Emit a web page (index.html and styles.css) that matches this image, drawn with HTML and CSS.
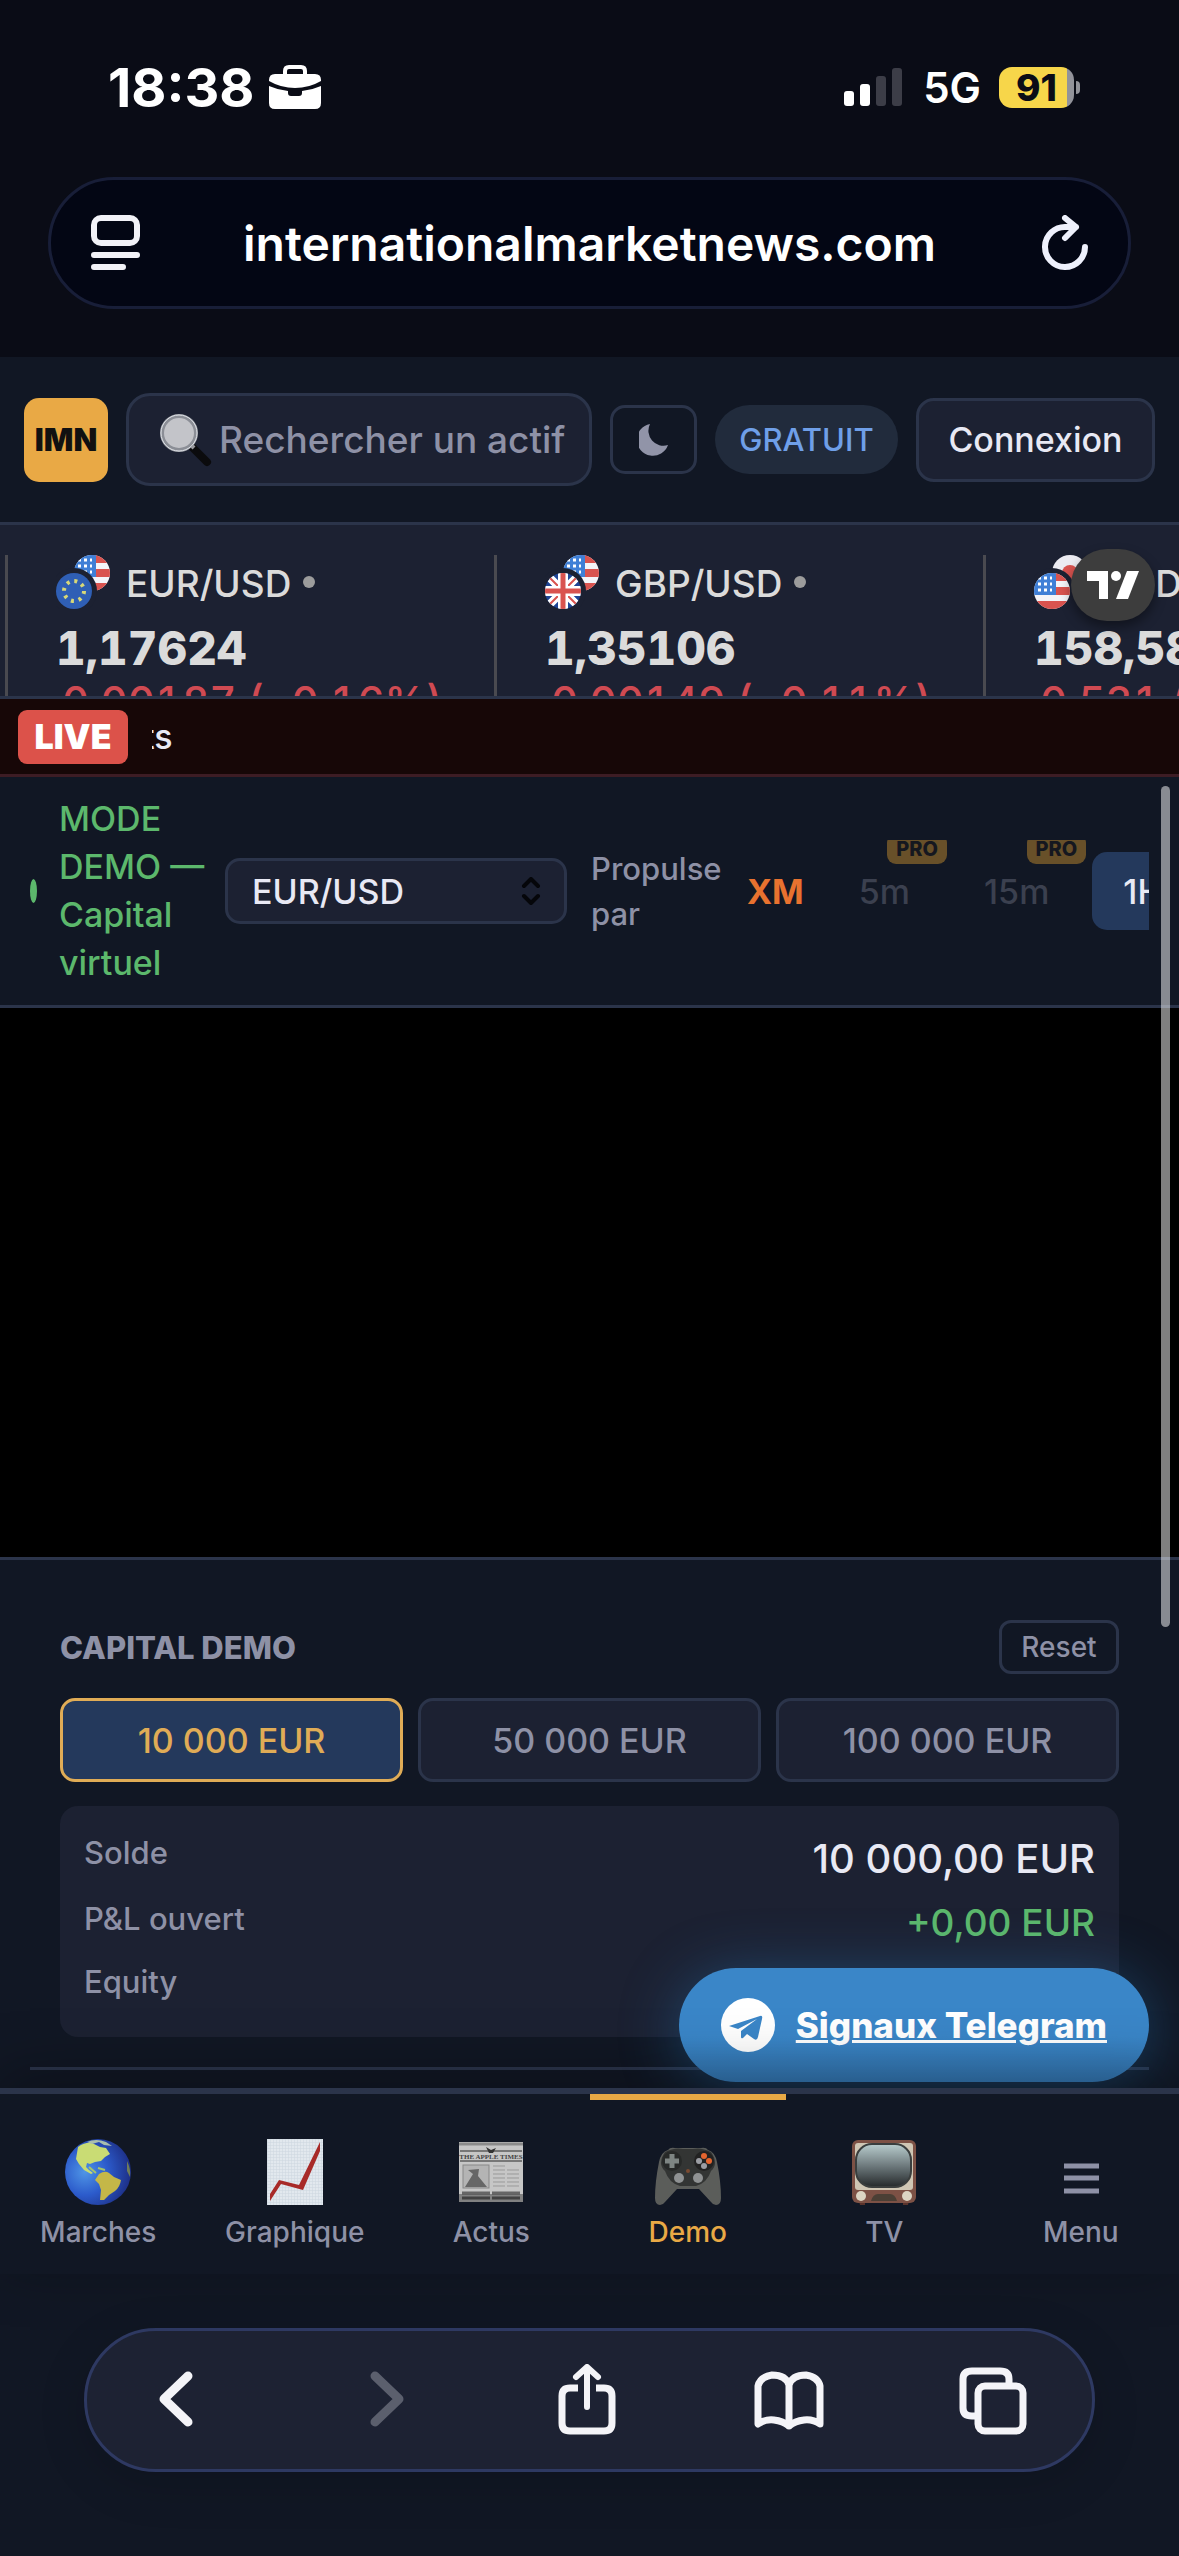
FILE: index.html
```html
<!DOCTYPE html>
<html lang="fr">

<head>
    <meta charset="UTF-8">
    <meta name="viewport" content="width=device-width, initial-scale=1.0">
    <title>internationalmarketnews.com</title>
    <link rel="stylesheet" href="styles.css">
</head>

<body>
    <!-- shared flag drawings -->
    <svg class="defs" aria-hidden="true">
        <defs>
            <clipPath id="round"><circle cx="18" cy="18" r="18" /></clipPath>
            <symbol id="us" viewBox="0 0 36 36">
                <g clip-path="url(#round)">
                    <rect width="36" height="36" fill="#f4f4f8" />
                    <path d="M18 0h18v8H18zM18 14h18v8H18zM0 28h36v8H0z" fill="#d9534f" />
                    <rect width="22" height="22" fill="#3f7fd6" />
                    <path d="M4 5h14M4 11h14M4 17h14" stroke="#fff" stroke-width="3" stroke-dasharray="3 3" />
                </g>
            </symbol>
            <symbol id="eu" viewBox="0 0 36 36">
                <circle cx="18" cy="18" r="18" fill="#2f5fb5" />
                <circle cx="18" cy="18" r="10" fill="none" stroke="#d8d878" stroke-width="4" stroke-dasharray="3 4.85" />
            </symbol>
            <symbol id="gb" viewBox="0 0 36 36">
                <g clip-path="url(#round)">
                    <rect width="36" height="36" fill="#1f4596" />
                    <path d="M0 0l36 36M36 0L0 36" stroke="#fff" stroke-width="8" />
                    <path d="M0 0l36 36M36 0L0 36" stroke="#d9534f" stroke-width="2" />
                    <path d="M18 0v36M0 18h36" stroke="#fff" stroke-width="10" />
                    <path d="M18 0v36M0 18h36" stroke="#d9534f" stroke-width="5" />
                </g>
            </symbol>
            <symbol id="jp" viewBox="0 0 36 36">
                <circle cx="18" cy="18" r="18" fill="#ececf2" />
                <circle cx="18" cy="18" r="8" fill="#d9534f" />
            </symbol>
        </defs>
    </svg>

    <div class="browser-top">
        <div class="status">
            <span class="time">18:38</span>
            <svg class="briefcase" width="52" height="44" viewBox="0 0 52 44">
                <path d="M16 9V6q0-4 4-4h12q4 0 4 4v3" fill="none" stroke="#fff" stroke-width="4" />
                <path d="M6 9h40q6 0 6 6v1q-12 7-26 7T0 16v-1q0-6 6-6z" fill="#fff" />
                <path d="M0 21q9 4 19 5v2q0 3 3 3h8q3 0 3-3v-2q10-1 19-5v17q0 6-6 6H6q-6 0-6-6z" fill="#fff" />
            </svg>
            <svg class="signal" width="58" height="38" viewBox="0 0 58 38">
                <rect x="0" y="23" width="10" height="15" rx="3" fill="#fff" />
                <rect x="16" y="16" width="10" height="22" rx="3" fill="#fff" />
                <rect x="32" y="8" width="10" height="30" rx="3" fill="#3c3d47" />
                <rect x="48" y="0" width="10" height="38" rx="3" fill="#3c3d47" />
            </svg>
            <span class="network">5G</span>
            <span class="battery">91</span>
        </div>
        <div class="address">
            <button class="bare" aria-label="Page">
                <svg width="50" height="56" viewBox="0 0 50 56" fill="none" stroke="#f2f2f8" stroke-width="6" stroke-linecap="round">
                    <rect x="3" y="3" width="43" height="25" rx="7" />
                    <path d="M3 40h43M3 52h29" />
                </svg>
            </button>
            <span class="url">internationalmarketnews.com</span>
            <button class="bare" aria-label="Recharger">
                <svg width="50" height="56" viewBox="0 0 50 56" fill="none" stroke="#eef0fc" stroke-width="6" stroke-linecap="round" stroke-linejoin="round">
                    <path d="M47 32A20 20 0 1 1 28 12h10M27 3l11 9-11 11" />
                </svg>
            </button>
        </div>
    </div>

    <header class="header">
        <a class="logo" href="#">IMN</a>
        <label class="search">
            <svg width="54" height="54" viewBox="0 0 54 54">
                <path d="M34 35l14 14" stroke="#0b0b0d" stroke-width="8" stroke-linecap="round" />
                <path d="M31 31l4 4" stroke="#9a9a9f" stroke-width="4" />
                <circle cx="20" cy="20" r="17" fill="#c3c4c9" stroke="#8b8e96" stroke-width="4" />
                <circle cx="20" cy="20" r="18" fill="none" stroke="#e2e5ea" stroke-width="1" />
            </svg>
            <input type="text" placeholder="Rechercher un actif" aria-label="Rechercher un actif">
        </label>
        <button class="theme" aria-label="Theme">
            <svg width="30" height="34" viewBox="0 0 30 34">
                <path d="M11 1A16 16 0 1 0 29 22A15 15 0 0 1 11 1z" fill="#9194a8" />
            </svg>
        </button>
        <span class="plan">GRATUIT</span>
        <button class="login">Connexion</button>
    </header>

    <section class="ticker">
        <div class="quote">
            <div class="pair">
                <svg width="54" height="54"><use href="#us" x="18" y="0" width="36" height="36" /><circle cx="18" cy="36" r="23" fill="#1c2132" /><use href="#eu" x="0" y="18" width="36" height="36" /></svg>
                <span>EUR/USD</span><i></i>
            </div>
            <div class="price">1,17624</div>
            <div class="change">0,00187 (−0,16%)</div>
        </div>
        <div class="quote">
            <div class="pair">
                <svg width="54" height="54"><use href="#us" x="18" y="0" width="36" height="36" /><circle cx="18" cy="36" r="23" fill="#1c2132" /><use href="#gb" x="0" y="18" width="36" height="36" /></svg>
                <span>GBP/USD</span><i></i>
            </div>
            <div class="price">1,35106</div>
            <div class="change">0,00149 (−0,11%)</div>
        </div>
        <div class="quote">
            <div class="pair">
                <svg width="54" height="54"><use href="#jp" x="18" y="0" width="36" height="36" /><circle cx="18" cy="36" r="23" fill="#1c2132" /><use href="#us" x="0" y="18" width="36" height="36" /></svg>
                <span>USD/JPY</span><i></i>
            </div>
            <div class="price">158,583</div>
            <div class="change">0,531 (−0,33%)</div>
        </div>
        <a class="tv-badge" href="#" aria-label="TradingView">
            <svg width="52" height="28" viewBox="0 0 52 28" fill="#fff">
                <path d="M0 0h21v28H12V10H0z" />
                <circle cx="29" cy="5" r="5" />
                <path d="M40 0h12L41 28H29z" />
            </svg>
        </a>
    </section>

    <section class="live">
        <strong>LIVE</strong>
        <div class="marquee"><span>ts</span></div>
    </section>

    <main class="demo">
        <div class="toolbar">
            <span class="dot"></span>
            <span class="mode">MODE DEMO — Capital virtuel</span>
            <div class="select">
                <select aria-label="Paire">
                    <option>EUR/USD</option>
                </select>
                <svg width="20" height="28" viewBox="0 0 20 28" fill="none" stroke="#05060a" stroke-width="4" stroke-linecap="round" stroke-linejoin="round">
                    <path d="M3 9l7-7 7 7M3 19l7 7 7-7" />
                </svg>
            </div>
            <span class="powered">Propulse par</span>
            <a class="broker" href="#">XM</a>
            <div class="frames">
                <button disabled>5m<em>PRO</em></button>
                <button disabled>15m<em>PRO</em></button>
                <button class="active">1H</button>
            </div>
        </div>

        <div class="chart"></div>

        <div class="panel">
            <section class="capital">
                <div class="capital-head">
                    <h2>CAPITAL DEMO</h2>
                    <button class="reset">Reset</button>
                </div>
                <div class="amounts">
                    <button class="active">10 000 EUR</button>
                    <button>50 000 EUR</button>
                    <button>100 000 EUR</button>
                </div>
                <dl class="balance">
                    <div class="balance-main">
                        <dt>Solde</dt>
                        <dd>10 000,00 EUR</dd>
                    </div>
                    <div>
                        <dt>P&amp;L ouvert</dt>
                        <dd class="up">+0,00 EUR</dd>
                    </div>
                    <div>
                        <dt>Equity</dt>
                        <dd></dd>
                    </div>
                </dl>
            </section>
        </div>

        <span class="scrollbar"></span>
        <a class="telegram" href="#">
            <svg width="54" height="54" viewBox="0 0 54 54">
                <circle cx="27" cy="27" r="27" fill="#fff" />
                <path d="M8 28L39 18q3-1 2 3l-4 18q-1 4-4 2l-7-5-4 4q-2 1-2-1v-6l16-12-19 10z" fill="#3a86c8" />
            </svg>
            <span>Signaux Telegram</span>
        </a>
    </main>

    <nav class="tabs">
        <a href="#">
            <svg width="66" height="66" viewBox="0 0 66 66">
                <defs>
                    <radialGradient id="sea" cx=".3" cy=".5" r=".7">
                        <stop offset="0" stop-color="#4f95e6" />
                        <stop offset=".5" stop-color="#2c5bcb" />
                        <stop offset="1" stop-color="#1d2f86" />
                    </radialGradient>
                </defs>
                <circle cx="33" cy="33" r="33" fill="url(#sea)" />
                <path d="M13 8q7-5 14-4l8 4 6 1 4 6-5 3-4 4-6 1-5 2-3-1-1 4 3 3 4 3-2 1-7-4-5-6-3-5z" fill="#c9dc74" />
                <path d="M22 3q9-4 19 0l6 4-8-1-5-3-7 2z" fill="#a9bfae" />
                <path d="M34 35q6-4 10-1l5 4 7 3q-1 7-6 11l-6 4-5 5-4 0 1-10-2-6-4-4z" fill="#c4b748" />
                <path d="M33 29l7 2M24 28l7 6" stroke="#a6c46c" stroke-width="2" />
                <path d="M62 22q4 8 3 16l-3-6z" fill="#6f7c58" />
            </svg>
            Marches
        </a>
        <a href="#">
            <svg width="56" height="66" viewBox="0 0 56 66">
                <defs>
                    <pattern id="grid" width="3" height="3" patternUnits="userSpaceOnUse">
                        <path d="M3 0H0v3" fill="none" stroke="#ccd5de" />
                    </pattern>
                </defs>
                <rect width="56" height="66" fill="#e2e8ee" />
                <rect width="56" height="66" fill="url(#grid)" />
                <path d="M3 62v-7l9-14 20 5L53 3v9L36 51l-22-6z" fill="#a82a28" />
            </svg>
            Graphique
        </a>
        <a href="#">
            <svg width="66" height="66" viewBox="0 0 66 66">
                <rect x="1" y="3" width="64" height="60" fill="#c6c6c6" />
                <path d="M1 5h64" stroke="#8b8b8b" stroke-width="3" />
                <path d="M2 12h62M2 22h62" stroke="#777" stroke-width="2" />
                <path d="M28 8l5 3 5-2-3 5h-4z" fill="#333" />
                <text x="33" y="20" class="paper-title">THE APPLE TIMES</text>
                <rect x="5" y="26" width="26" height="23" fill="#b4b4b4" stroke="#888" />
                <path d="M7 48l8-13-5-4 11-1-1 7 9 11z" fill="#666" />
                <path d="M35 27h13M35 31h26M35 35h26M35 39h26M35 43h26M35 47h26" stroke="#999" stroke-dasharray="12 2" />
                <path d="M4 54h58M4 59h58" stroke="#666" stroke-width="3" stroke-dasharray="28 2" />
                <rect x="1" y="55" width="64" height="8" fill="#000" opacity=".35" />
            </svg>
            Actus
        </a>
        <a href="#" class="active">
            <svg width="66" height="66" viewBox="0 0 66 66">
                <path d="M13 11q2-3 7-2h26q5-1 7 2 7 2 9 12 4 20 4 36 0 7-5 7-3 0-5-3L44 50H22l-12 13q-2 3-5 3-5 0-5-7 0-16 4-36 2-10 9-12z" fill="#5b5d5a" />
                <path d="M10 13q10-5 18-3h10q8-2 18 3 8 12 0 19-4 12-15 15H25Q14 44 10 32q-8-7 0-19z" fill="#333534" />
                <circle cx="17" cy="22" r="10" fill="#272928" />
                <path d="M17 15v14M10 22h14" stroke="#7e8583" stroke-width="5" />
                <circle cx="49" cy="22" r="10" fill="#222" />
                <circle cx="49" cy="17" r="3" fill="#e5652f" />
                <circle cx="54" cy="22" r="3" fill="#e5652f" />
                <circle cx="44" cy="22" r="3" fill="#9b9da3" />
                <circle cx="49" cy="27" r="3" fill="#9b9da3" />
                <circle cx="24" cy="39" r="5" fill="#8f9293" />
                <circle cx="43" cy="39" r="5" fill="#8f9293" />
                <circle cx="33" cy="32" r="2" fill="#7b4a30" />
            </svg>
            Demo
        </a>
        <a href="#">
            <svg width="66" height="66" viewBox="0 0 66 66">
                <defs>
                    <linearGradient id="tube" x2="0" y2="1">
                        <stop offset="0" stop-color="#b9cdce" />
                        <stop offset=".5" stop-color="#6f7b7e" />
                        <stop offset="1" stop-color="#25292b" />
                    </linearGradient>
                </defs>
                <path d="M8 62h6v4H9zM52 62h6l-1 4h-5z" fill="#5a332b" />
                <rect x="1" y="1" width="64" height="63" rx="6" fill="#7d5145" />
                <rect x="4" y="4" width="58" height="47" rx="3" fill="#cfc6b4" />
                <rect x="5" y="5" width="55" height="43" rx="16" fill="url(#tube)" stroke="#3a3e3e" stroke-width="2" />
                <path d="M20 62q2-7 7-7h12q5 0 7 7z" fill="#4b3f35" />
                <circle cx="10" cy="57" r="5" fill="#dcd5c3" />
                <circle cx="56" cy="57" r="5" fill="#dcd5c3" />
            </svg>
            TV
        </a>
        <a href="#">
            <svg width="66" height="66" viewBox="0 0 66 66">
                <path d="M16 27h35M16 39h35M16 52h35" stroke="#8e91a6" stroke-width="5" />
            </svg>
            Menu
        </a>
    </nav>

    <footer class="browser-bottom">
        <div class="controls">
            <button class="bare" aria-label="Retour">
                <svg width="72" height="72" viewBox="0 0 72 72" fill="none" stroke="#f4f4f8" stroke-width="9" stroke-linecap="round" stroke-linejoin="round">
                    <path d="M48 12L24 35l24 23" />
                </svg>
            </button>
            <button class="bare" aria-label="Suivant">
                <svg width="72" height="72" viewBox="0 0 72 72" fill="none" stroke="#5b5f6d" stroke-width="9" stroke-linecap="round" stroke-linejoin="round">
                    <path d="M31 12l24 23-24 23" />
                </svg>
            </button>
            <button class="bare" aria-label="Partager">
                <svg width="72" height="72" viewBox="0 0 72 72" fill="none" stroke="#f4f4f8" stroke-width="6" stroke-linecap="round" stroke-linejoin="round">
                    <path d="M39 43V4M28 13L39 3l11 10" />
                    <path d="M30 24h-8q-8 0-8 8v27q0 8 8 8h34q8 0 8-8V32q0-8-8-8h-8" stroke-width="7" stroke-linecap="butt" />
                </svg>
            </button>
            <button class="bare" aria-label="Signets">
                <svg width="72" height="72" viewBox="0 0 72 72" fill="none" stroke="#f4f4f8" stroke-width="7" stroke-linecap="round" stroke-linejoin="round">
                    <path d="M37 62Q31 57 22 56 13 55 6 60V22Q8 13 20 11q14 0 17 10 3-10 17-10 12 2 14 11v38q-7-5-16-4-9 1-15 6zM37 21v41" />
                </svg>
            </button>
            <button class="bare" aria-label="Onglets">
                <svg width="72" height="72" viewBox="0 0 72 72" fill="none" stroke="#f4f4f8" stroke-width="7">
                    <rect x="22" y="22" width="45" height="45" rx="7" />
                    <path d="M19 52h-3q-9 0-9-8V15q0-8 9-8h28q9 0 9 8v4" />
                </svg>
            </button>
        </div>
    </footer>
</body>

</html>
```
FILE: styles.css
```css
* {
    box-sizing: border-box;
}

body {
    margin: 0;
    min-height: 100vh;
    display: flex;
    flex-direction: column;
    background-color: #111724;
    color: #e8e9f4;
    font-family: Inter, "Liberation Sans", sans-serif;
    font-size: 34px;
    font-weight: 500;
    overflow-x: hidden;
}

button,
input,
select {
    font: inherit;
    color: inherit;
    margin: 0;
}

button {
    padding: 0;
    border: 3px solid #2b344a;
    background-color: #1c2132;
}

a {
    color: inherit;
    text-decoration: none;
}

svg {
    display: block;
    flex-shrink: 0;
}

.defs {
    position: absolute;
    width: 0;
    height: 0;
}

.bare {
    border: 0;
    background: none;
}

/* browser bars */

.browser-top {
    height: 357px;
    padding: 60px 48px 48px;
    background-color: #0a0c16;
}

.status {
    display: flex;
    align-items: center;
    height: 54px;
    padding: 0 50px 0 60px;
    color: #fff;
}

.time {
    font-size: 54px;
    font-weight: 700;
}

.briefcase {
    margin-left: 15px;
}

.signal {
    margin-left: auto;
}

.network {
    margin: 0 18px 0 21px;
    font-size: 42px;
    font-weight: 600;
}

.battery {
    position: relative;
    width: 75px;
    height: 41px;
    border-radius: 13px;
    background: linear-gradient(90deg, #f7d64a 68px, #92939a 68px);
    color: #0a0c16;
    font-size: 37px;
    font-weight: 800;
    line-height: 41px;
    text-align: center;
    margin-right: 7px;
}

.battery::after {
    content: "";
    position: absolute;
    left: 77px;
    top: 14px;
    width: 4px;
    height: 13px;
    border-radius: 0 4px 4px 0;
    background-color: #92939a;
}

.address {
    display: flex;
    align-items: center;
    justify-content: space-between;
    height: 132px;
    margin-top: 63px;
    padding: 0 40px;
    border: 3px solid #181e38;
    border-radius: 66px;
    background-color: #030614;
}

.url {
    color: #fff;
    font-size: 48px;
    font-weight: 600;
}

.browser-bottom {
    padding: 54px 84px 84px;
}

.controls {
    display: flex;
    align-items: center;
    justify-content: space-between;
    height: 144px;
    padding: 0 64px 0 53px;
    border: 3px solid #2e3962;
    border-radius: 72px;
    background-color: #1d2233;
    box-shadow: 0 12px 48px rgba(0, 0, 0, 0.15);
}

/* site header */

.header {
    display: flex;
    align-items: center;
    gap: 18px;
    height: 168px;
    padding: 0 24px;
    border-bottom: 3px solid #2b344a;
}

.logo {
    width: 84px;
    height: 84px;
    border-radius: 15px;
    background-color: #e9a945;
    color: #111;
    font-size: 31px;
    font-weight: 900;
    line-height: 84px;
    text-align: center;
}

.search {
    flex: 1;
    min-width: 0;
    height: 93px;
    display: flex;
    align-items: center;
    gap: 6px;
    padding: 0 15px 0 30px;
    border: 3px solid #2b344a;
    border-radius: 24px;
    background-color: #1c2132;
}

.search input {
    flex: 1;
    min-width: 0;
    padding: 0;
    border: 0;
    background: none;
    font-size: 37px;
}

.search input::placeholder {
    color: #8e91a6;
}

.theme {
    width: 87px;
    height: 69px;
    display: flex;
    align-items: center;
    justify-content: center;
    border-radius: 15px;
    background: none;
}

.plan {
    width: 183px;
    border-radius: 35px;
    background-color: #212b3c;
    color: #6f9fe8;
    font-size: 31px;
    line-height: 69px;
    text-align: center;
}

.login {
    width: 239px;
    height: 84px;
    border-radius: 18px;
}

/* quotes strip */

.ticker {
    position: relative;
    display: flex;
    height: 174px;
    padding: 30px 0 0 5px;
    overflow: hidden;
    border-bottom: 3px solid #2b344a;
    background-color: #1c2132;
    color: #dbdbdb;
    white-space: nowrap;
}

.quote {
    flex: 0 0 489px;
    height: 180px;
    padding-left: 48px;
    border-left: 3px solid #4a4a50;
    font-variant-numeric: tabular-nums;
}

.pair {
    display: flex;
    align-items: center;
    font-size: 37px;
}

.pair span {
    margin: 3px 12px 0 16px;
}

.pair i {
    width: 12px;
    height: 12px;
    border-radius: 50%;
    background-color: #9c9c9c;
}

.price {
    margin-top: 15px;
    font-size: 46px;
    font-weight: 800;
    line-height: 48px;
}

.change {
    margin-top: 6px;
    padding-left: 6px;
    color: #d04a52;
    font-size: 42px;
    line-height: 48px;
}

.tv-badge {
    position: absolute;
    top: 24px;
    right: 24px;
    width: 84px;
    height: 72px;
    display: flex;
    align-items: center;
    justify-content: center;
    border-radius: 36px;
    background-color: #3d3d3d;
    box-shadow: 0 6px 12px rgba(0, 0, 0, 0.4);
}

/* live bar */

.live {
    display: flex;
    align-items: center;
    gap: 24px;
    height: 78px;
    padding-left: 18px;
    border-bottom: 3px solid #3d1c24;
    background-color: #170707;
}

.live strong {
    width: 110px;
    border-radius: 9px;
    background-color: #dc524a;
    color: #fff;
    font-weight: 900;
    line-height: 54px;
    text-align: center;
}

.marquee {
    flex: 1;
    overflow: hidden;
}

.marquee span {
    display: block;
    margin-left: -9px;
}

/* demo page */

.demo {
    flex: 1;
    position: relative;
    display: flex;
    flex-direction: column;
}

.toolbar {
    display: flex;
    align-items: center;
    gap: 18px;
    padding: 18px 30px;
    border-bottom: 3px solid #2b344a;
}

.dot {
    flex-shrink: 0;
    width: 7px;
    height: 24px;
    margin-right: 4px;
    border-radius: 50%;
    background-color: #5cb86c;
}

.mode {
    flex: 0 0 150px;
    margin-right: -2px;
    color: #5cb86c;
    line-height: 48px;
}

.select {
    position: relative;
    flex: 0 0 342px;
}

.select select {
    display: block;
    width: 100%;
    height: 66px;
    padding: 0 24px;
    appearance: none;
    border: 3px solid #2b344a;
    border-radius: 15px;
    background-color: #1c2132;
}

.select svg {
    position: absolute;
    right: 26px;
    top: 19px;
}

.powered {
    flex: 0 0 144px;
    padding-left: 6px;
    color: #8e91a6;
    font-size: 31px;
    line-height: 45px;
}

.broker {
    padding-right: 6px;
    color: #e8722f;
    font-weight: 700;
}

.frames {
    flex: 1;
    min-width: 0;
    display: flex;
    gap: 12px;
    padding: 12px 0;
    overflow: hidden;
}

.frames button {
    position: relative;
    flex-shrink: 0;
    height: 78px;
    padding: 0 31px;
    border: 0;
    border-radius: 15px;
    background: none;
    color: #3b404f;
}

.frames .active {
    background-color: #24395c;
    color: #e8e9f4;
}

.frames em {
    position: absolute;
    top: -18px;
    right: -6px;
    padding: 0 9px;
    border-radius: 9px;
    background-color: #685029;
    color: #15171f;
    font-size: 20px;
    font-style: normal;
    font-weight: 800;
    line-height: 30px;
}

.chart {
    height: 549px;
    background-color: #000;
}

.panel {
    flex: 1;
    padding: 0 30px;
    border-top: 3px solid #2b344a;
}

.capital {
    padding: 60px 30px 30px;
    border-bottom: 3px solid #2b344a;
}

.capital-head {
    display: flex;
    align-items: center;
    justify-content: space-between;
}

.capital-head h2 {
    margin: 0;
    color: #8e91a6;
    font-size: 31px;
    font-weight: 800;
}

.reset {
    width: 120px;
    height: 54px;
    border-radius: 12px;
    background: none;
    color: #8e91a6;
    font-size: 28px;
}

.amounts {
    display: grid;
    grid-template-columns: repeat(3, 1fr);
    gap: 15px;
    margin: 24px 0;
}

.amounts button {
    height: 84px;
    border-radius: 15px;
    color: #8e91a6;
}

.amounts .active {
    border-color: #e0ac56;
    background-color: #24395c;
    color: #e0ac56;
}

.balance {
    margin: 0;
    padding: 24px;
    border-radius: 18px;
    background-color: #1c2132;
}

.balance div {
    display: flex;
    justify-content: space-between;
    min-height: 54px;
}

.balance div + div {
    margin-top: 9px;
}

.balance dt {
    color: #8e91a6;
    font-size: 31px;
    line-height: 45px;
}

.balance dd {
    margin: 0;
    font-size: 37px;
    line-height: 54px;
}

.balance-main dd {
    font-size: 40px;
    line-height: 57px;
}

.balance .up {
    color: #5cb86c;
}

.scrollbar {
    position: absolute;
    top: 9px;
    right: 9px;
    width: 9px;
    height: 841px;
    border-radius: 5px;
    background-color: rgba(255, 255, 255, 0.5);
}

.telegram {
    position: absolute;
    right: 30px;
    bottom: 6px;
    display: flex;
    align-items: center;
    gap: 21px;
    height: 114px;
    padding: 0 42px;
    border-radius: 57px;
    background: linear-gradient(#3a86c8 60%, #3273ad);
    box-shadow: 0 6px 60px rgba(42, 130, 200, 0.4);
    color: #fff;
    font-size: 35px;
    font-weight: 800;
}

.telegram span {
    text-decoration: underline;
    text-decoration-thickness: 3px;
}

/* bottom navigation */

.tabs {
    position: relative;
    display: grid;
    grid-template-columns: repeat(6, 1fr);
    height: 186px;
    border-top: 6px solid #2b344a;
    background-color: #111724;
    box-shadow: 0 -12px 60px rgba(0, 0, 0, 0.3);
}

.tabs a {
    display: flex;
    flex-direction: column;
    align-items: center;
    gap: 9px;
    padding-top: 39px;
    border-top: 6px solid transparent;
    color: #8e91a6;
    font-size: 28px;
    line-height: 36px;
}

.tabs .active {
    border-color: #e9a945;
    color: #e9a945;
}

.paper-title {
    fill: #444;
    font-family: "Liberation Serif", serif;
    font-size: 7px;
    font-weight: 700;
    text-anchor: middle;
}
```
